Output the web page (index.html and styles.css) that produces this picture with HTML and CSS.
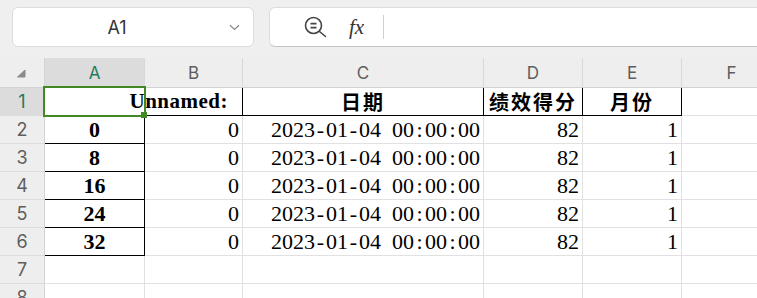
FILE: index.html
```html
<!DOCTYPE html>
<html lang="zh-CN">
<head>
    <meta charset="UTF-8">
    <meta name="viewport" content="width=device-width, initial-scale=1.0">
    <title>Sheet1</title>
    <link rel="stylesheet" href="styles.css">
</head>
<body>
    <header class="toolbar">
        <div class="name-box">
            <span class="cell-ref">A1</span>
            <svg class="chevron" viewBox="0 0 11 7"><path d="M1 1.2 L5.5 5.5 L10 1.2" fill="none" stroke="#8a8a8a" stroke-width="1.2"/></svg>
        </div>
        <div class="formula-box">
            <svg class="zoom-icon" viewBox="0 0 24 22">
                <circle cx="9.5" cy="9.5" r="8" fill="none" stroke="#444" stroke-width="1.6"/>
                <path d="M6.5 7.6 H12.5 M6.5 11.6 H12.5" stroke="#444" stroke-width="1.6"/>
                <path d="M15.5 15.5 L21.5 20.5" stroke="#444" stroke-width="1.6" stroke-linecap="round"/>
            </svg>
            <span class="fx">fx</span>
            <span class="divider"></span>
        </div>
    </header>

    <main id="sheet" class="sheet">
        <!-- Cells will be inserted here -->
        <div class="selection"></div>
    </main>

    <script>
        // Sheet data
        const columns = ['A', 'B', 'C', 'D', 'E', 'F'];
        const headers = ['', 'Unnamed:', '日期', '绩效得分', '月份', ''];
        const records = [
            { index: 0, unnamed: 0, date: '2023-01-04 00:00:00', score: 82, month: 1 },
            { index: 8, unnamed: 0, date: '2023-01-04 00:00:00', score: 82, month: 1 },
            { index: 16, unnamed: 0, date: '2023-01-04 00:00:00', score: 82, month: 1 },
            { index: 24, unnamed: 0, date: '2023-01-04 00:00:00', score: 82, month: 1 },
            { index: 32, unnamed: 0, date: '2023-01-04 00:00:00', score: 82, month: 1 }
        ];

        const sheet = document.getElementById('sheet');
        const selection = sheet.querySelector('.selection');

        function addCell(className, html) {
            const cell = document.createElement('div');
            cell.className = 'cell ' + className;
            cell.innerHTML = html;
            sheet.insertBefore(cell, selection);
        }

        // keep every character of a date on the same width, like the sheet does
        function spaceDate(text) {
            return text.replace(/[^0-9]/g, ch => `<span class="sep">${ch === ' ' ? '&nbsp;' : ch}</span>`);
        }

        // Column headers
        addCell('corner', '<svg viewBox="0 0 10 9"><path d="M9 1 L9 8 L1.5 8 Z" fill="#8a8a8a" stroke="#8a8a8a" stroke-linejoin="round"/></svg>');
        columns.forEach(col => addCell(col === 'A' ? 'col-head active' : 'col-head', col));

        // Row 1: titles
        addCell('row-head active', '1');
        addCell('boxed', '');
        addCell('title unnamed boxed', headers[1]);
        addCell('title center boxed', headers[2]);
        addCell('title center boxed', headers[3]);
        addCell('title center boxed', headers[4]);
        addCell('', '');

        // Data rows
        records.forEach((r, i) => {
            addCell('row-head', i + 2);
            addCell('index center boxed', r.index);
            addCell('num', r.unnamed);
            addCell('num', spaceDate(r.date));
            addCell('num', r.score);
            addCell('num', r.month);
            addCell('', '');
        });

        // Empty rows
        [7, 8].forEach(n => {
            addCell('row-head', n);
            columns.forEach(() => addCell('', ''));
        });
    </script>
</body>
</html>
```

FILE: styles.css
```css
* {
    margin: 0;
    padding: 0;
    box-sizing: border-box;
}

body {
    background-color: #efefef;
    font-family: Inter, 'Noto Sans', sans-serif;
    overflow: hidden;
}

.toolbar {
    display: flex;
    gap: 15px;
    height: 47px;
    padding: 7px 0 0 12px;
}

.name-box {
    width: 242px;
    height: 40px;
    background: #ffffff;
    border: 1px solid #dcdcdc;
    border-radius: 6px;
    display: flex;
    align-items: center;
}

.cell-ref {
    flex: 1;
    text-align: center;
    padding-right: 8px;
    font-size: 18px;
    color: #333;
}

.chevron {
    width: 11px;
    height: 7px;
    margin-right: 13px;
}

.formula-box {
    flex: 1;
    height: 40px;
    margin-right: -12px;
    background: #ffffff;
    border: 1px solid #dcdcdc;
    border-bottom-color: #c4c4c4;
    border-radius: 6px;
    display: flex;
    align-items: center;
    padding-left: 34px;
}

.zoom-icon {
    width: 24px;
    height: 22px;
}

.fx {
    margin-left: 21px;
    font: italic 21px 'Liberation Serif', serif;
    color: #333;
}

.divider {
    margin-left: 19px;
    width: 1px;
    height: 24px;
    background: #d0d0d0;
}

.sheet {
    margin-top: 11px;
    position: relative;
    display: grid;
    grid-template-columns: 45px 100px 98px 241px 99px 99px 100px;
    grid-template-rows: 30px repeat(8, 28px);
    background: #ffffff;
}

.cell {
    display: flex;
    align-items: center;
    padding: 0 3px;
    border-right: 1px solid #e1e1e1;
    border-bottom: 1px solid #e1e1e1;
    font-family: 'Liberation Serif', 'Noto Sans CJK SC', serif;
    font-size: 22px;
    color: #000;
    white-space: nowrap;
}

.col-head,
.row-head {
    justify-content: center;
    background: #eeeeee;
    font-family: Inter, 'Noto Sans', sans-serif;
    color: #5e5e5e;
}

.col-head {
    font-size: 17px;
    border-right-color: #d9d9d9;
    border-bottom-color: #d2d2d2;
}

.row-head {
    font-size: 18px;
    border-right-color: #d4d4d4;
    border-bottom-color: #dcdcdc;
}

.corner {
    background: #eeeeee;
    border-right-color: #d4d4d4;
    border-bottom-color: #d2d2d2;
    justify-content: flex-end;
    align-items: flex-end;
    padding: 0 18px 9px 0;
}

.corner svg {
    width: 10px;
    height: 9px;
}

.active {
    background: #dcdcdc;
    color: #1e7d5c;
}

.boxed {
    border-right-color: #000;
    border-bottom-color: #000;
}

.title {
    font-size: 21px;
    font-weight: 700;
}

.title.center {
    font-family: 'Noto Sans CJK SC', sans-serif;
    font-size: 20px;
    letter-spacing: 2px;
}

.unnamed {
    justify-content: flex-end;
    padding-right: 14px;
    letter-spacing: 0.5px;
}

.center {
    justify-content: center;
}

.index {
    font-weight: 700;
}

.num {
    justify-content: flex-end;
}

.sep {
    display: inline-block;
    width: 11px;
    text-align: center;
}

.selection {
    position: absolute;
    left: 43px;
    top: 28px;
    width: 103px;
    height: 31px;
    border: 2px solid #3f8a25;
    pointer-events: none;
}

.selection::after {
    content: '';
    position: absolute;
    right: -3px;
    bottom: -3px;
    width: 6px;
    height: 6px;
    background: #3f8a25;
}
```
